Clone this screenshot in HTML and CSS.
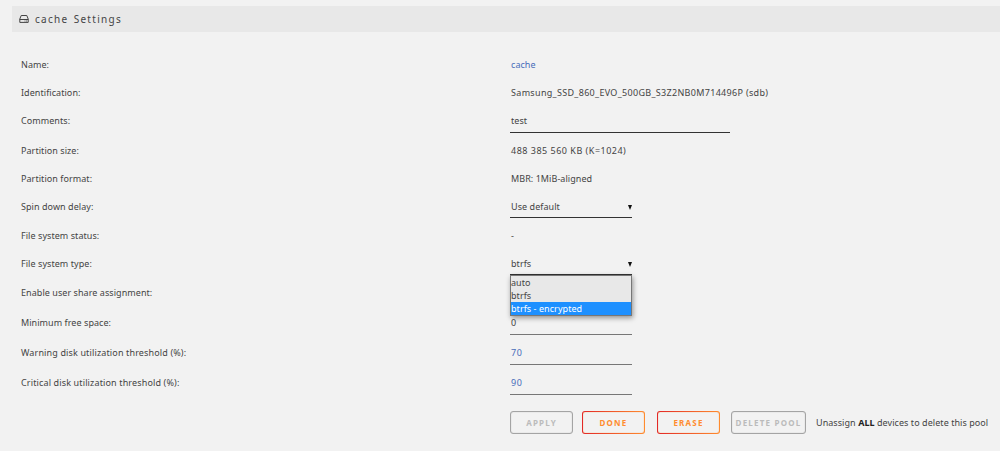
FILE: index.html
```
<!DOCTYPE html>
<html lang="en">
<head>
  <meta charset="UTF-8">
  <meta name="viewport" content="width=device-width, initial-scale=1.0">
  <title>cache Settings</title>
  <link rel="stylesheet" href="styles.css">
</head>
<body>

  <div class="title">
    <svg class="disk-icon" viewBox="0 0 10 10" width="10" height="10">
      <path d="M0.8 5 L2.2 1.5 H7.8 L9.2 5 V8.4 H0.8 Z" />
      <path d="M0.8 5.5 H9.2" />
      <path d="M5.6 7 H6.4 M7.2 7 H8" />
    </svg>
    <span>cache Settings</span>
  </div>

  <form class="settings">
    <div class="row">
      <span class="label">Name:</span>
      <a class="value link">cache</a>
    </div>
    <div class="row">
      <span class="label">Identification:</span>
      <span class="value ident">Samsung_SSD_860_EVO_500GB_S3Z2NB0M714496P (sdb)</span>
    </div>
    <div class="row row-input">
      <span class="label">Comments:</span>
      <span class="value field wide">test</span>
    </div>
    <div class="row">
      <span class="label">Partition size:</span>
      <span class="value size">488 385 560 KB (K=1024)</span>
    </div>
    <div class="row">
      <span class="label">Partition format:</span>
      <span class="value">MBR: 1MiB-aligned</span>
    </div>
    <div class="row row-select">
      <span class="label">Spin down delay:</span>
      <span class="value field select">Use default</span>
    </div>
    <div class="row">
      <span class="label">File system status:</span>
      <span class="value">-</span>
    </div>
    <div class="row row-select">
      <span class="label">File system type:</span>
      <div class="value field select">btrfs
        <ul class="options">
          <li>auto</li>
          <li>btrfs</li>
          <li class="active">btrfs - encrypted</li>
        </ul>
      </div>
    </div>
    <div class="row row-input">
      <span class="label">Enable user share assignment:</span>
    </div>
    <div class="row row-input">
      <span class="label">Minimum free space:</span>
      <span class="value field number">0</span>
    </div>
    <div class="row row-input">
      <span class="label threshold">Warning disk utilization threshold (%):</span>
      <span class="value field number link">70</span>
    </div>
    <div class="row row-input">
      <span class="label threshold">Critical disk utilization threshold (%):</span>
      <span class="value field number link">90</span>
    </div>

    <div class="buttons">
      <button type="button" class="apply" disabled>APPLY</button>
      <button type="button" class="done">DONE</button>
      <button type="button" class="erase">ERASE</button>
      <button type="button" class="delete" disabled>DELETE POOL</button>
      <span class="note">Unassign <b>ALL</b> devices to delete this pool</span>
    </div>
  </form>

</body>
</html>
```
FILE: styles.css
```
body {
  font-family: "Noto Sans", sans-serif;
  font-size: 9px;
  letter-spacing: 0.06px;
  color: #444;
  margin: 0;
  padding: 6px 0 0 12px;
  background-color: #f2f2f2;
  height: 451px;
  box-sizing: border-box;
  overflow: hidden;
}

.title {
  display: flex;
  align-items: center;
  height: 25px;
  padding: 0 0 1px 7px;
  gap: 6px;
  background-color: #e8e8e8;
  font-size: 10px;
  letter-spacing: 1.3px;
  word-spacing: 1.2px;
}

.disk-icon {
  fill: none;
  stroke: #444;
  stroke-width: 1;
}

.settings {
  margin-top: 19px;
  padding-left: 9px;
}

.row {
  display: grid;
  grid-template-columns: 489px 1fr;
  height: 28px;
  line-height: 28px;
}

.row-input {
  height: 30px;
}

.row-select {
  height: 29px;
}

.threshold {
  letter-spacing: 0.14px;
}

.value {
  padding-left: 1px;
  white-space: nowrap;
}

.ident {
  letter-spacing: 0.32px;
}

.size {
  letter-spacing: 0.5px;
}

.link {
  color: #486dba;
}

.field {
  width: 122px;
  height: 26px;
  box-sizing: border-box;
  border-bottom: 1px solid #333;
}

.wide {
  width: 220px;
}

.number {
  border-bottom-color: #777;
  letter-spacing: 0.5px;
}

.select {
  display: flex;
  justify-content: space-between;
  height: 25px;
  position: relative;
}

.select::after {
  content: "";
  align-self: center;
  margin-top: 4px;
  border: 2.5px solid transparent;
  border-top: 5px solid #111;
  border-bottom: none;
}

.options {
  position: absolute;
  top: 25px;
  left: 0;
  z-index: 1;
  width: 122px;
  margin: 0;
  padding: 0;
  box-sizing: border-box;
  list-style-type: none;
  border: 1px solid #777;
  background-color: #e8e8e8;
  box-shadow: 1px 2px 5px rgba(0, 0, 0, 0.4);
  line-height: 13px;
}

.options li {
  height: 13px;
}

.options .active {
  background-color: #1e90ff;
  color: #fff;
}

.buttons {
  display: flex;
  align-items: center;
  height: 23px;
  margin: 12px 0 0 489px;
}

button {
  width: 63px;
  height: 23px;
  padding: 0;
  font-family: inherit;
  font-size: 8px;
  font-weight: bold;
  letter-spacing: 1.2px;
  border: 1px solid transparent;
  border-radius: 3px;
  color: #ff8c2f;
  background: linear-gradient(#f2f2f2, #f2f2f2) padding-box,
              linear-gradient(90deg, #e22828, #ff8c2f) border-box;
  box-shadow: inset 0 0 1px #ff8c2f;
}

button:disabled {
  color: #bbb;
  border-color: #a4a4a4;
  background: none;
  box-shadow: inset 0 0 1px #a4a4a4;
}

.done {
  margin-left: 9px;
}

.erase {
  margin-left: 12px;
}

.delete {
  width: 75px;
  margin-left: 11px;
}

.note {
  margin-left: 10px;
  white-space: nowrap;
}

.note b {
  color: #222;
}
```
